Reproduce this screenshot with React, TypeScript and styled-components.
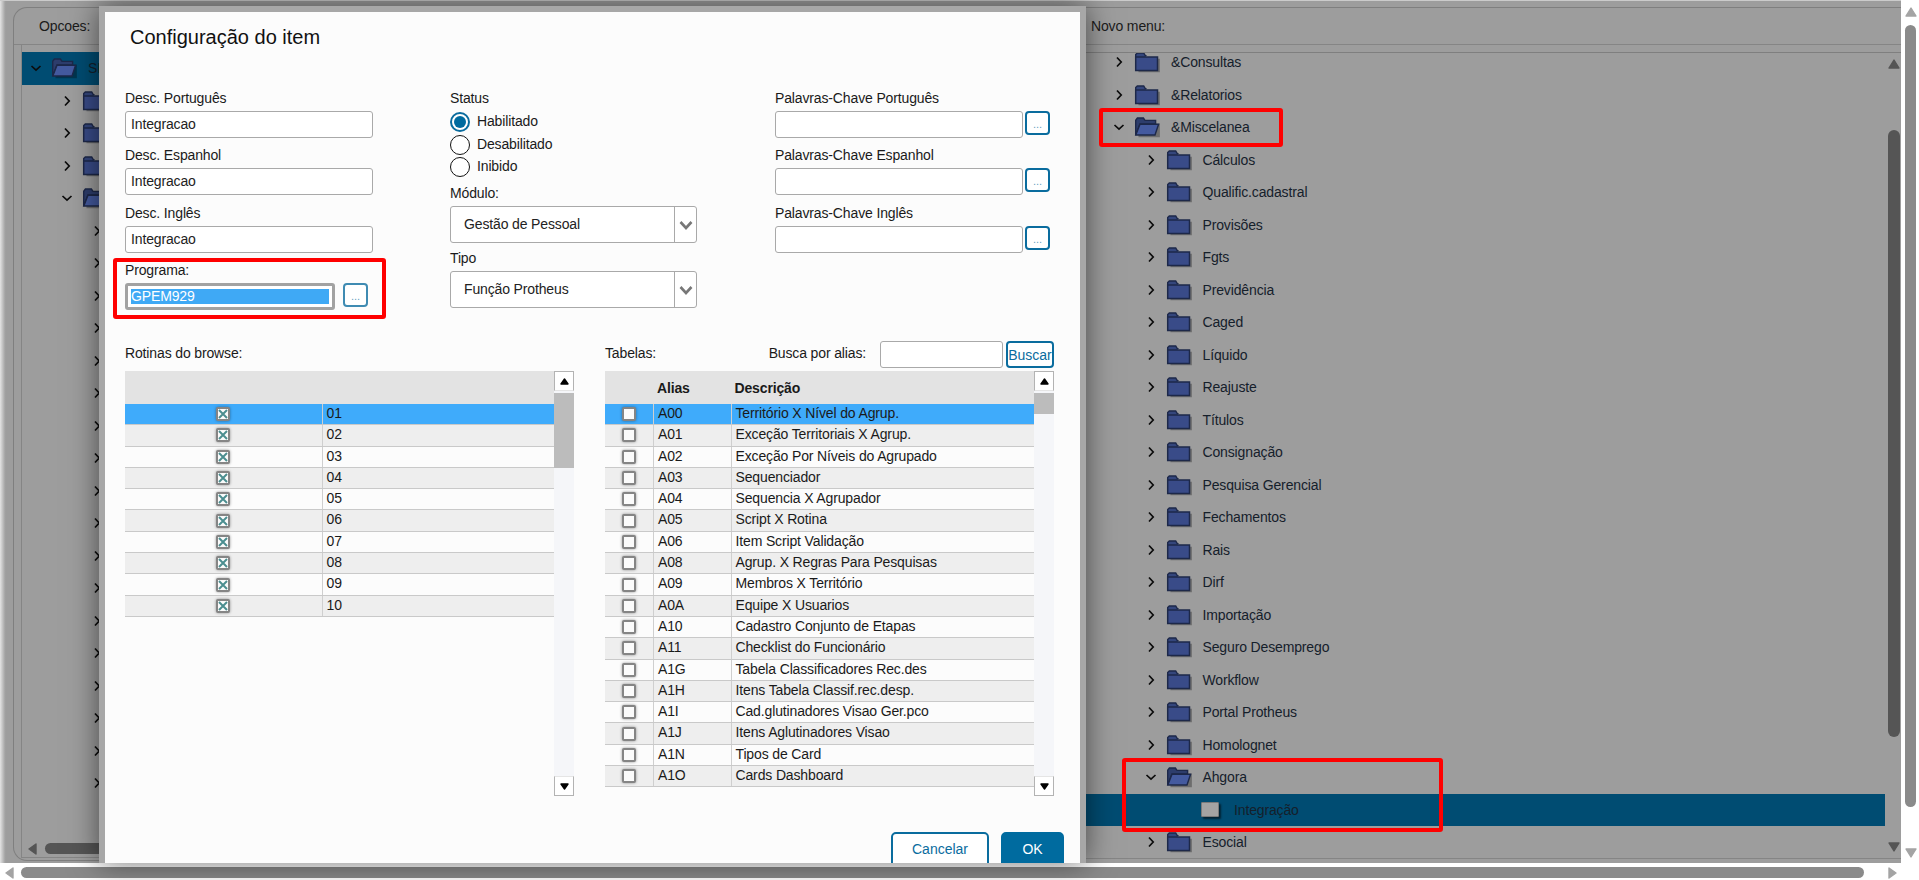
import React from "react";
import styled, { createGlobalStyle } from "styled-components";

const Global = createGlobalStyle`
  html, body { margin: 0; padding: 0; background: #fff; overflow: hidden; }
  * { box-sizing: border-box; }
  body { font-family: "Liberation Sans", Arial, sans-serif; font-size: 14px; letter-spacing: -0.14px; color: #111; }
`;

const Page = styled.div`
  position: relative; width: 1919px; height: 880px; overflow: hidden;
  display: grid; grid-template-columns: 1901px 18px; grid-template-rows: 863px 17px;
  background: #fff;
`;
const Backdrop = styled.div`
  display: flex; background: #9d9d9d; border-top: 1px solid #cbcbcb;
`;
const LeftPanel = styled.div`
  width: 1086px; padding: 6px 0 2px 13px; flex: none;
  background: linear-gradient(to right, #e4e4e4 0, #a2a2a2 5px, #9d9d9d 6px);
`;
const LeftFrame = styled.div`
  height: 100%; display: flex; flex-direction: column;
  border: 1px solid #7f7f7f; border-right: 0; border-radius: 14px 0 0 14px;
`;
const PanelHead = styled.div`
  height: 37px; flex: none; display: flex; align-items: center; padding-left: 25px;
  border-bottom: 1px solid #858585; color: #1b1b1b;
`;
const LeftBody = styled.div`
  flex: 1; min-height: 0; margin-left: 7px; display: flex; flex-direction: column;
  border-left: 1px solid #858585; border-bottom: 1px solid #858585; margin-bottom: 2px;
`;
const LeftTree = styled.div`
  flex: 1; min-height: 0; overflow: hidden; margin-top: 7px;
`;
const TreeRow = styled.div<{ $pad: number; $active?: boolean }>`
  height: 32.5px; display: flex; align-items: center; padding-left: ${(p) => p.$pad}px;
  background: ${(p) => (p.$active ? "#004c72" : "transparent")};
  color: #15202b; white-space: nowrap;
`;
const ChevronSlot = styled.span`
  width: 12px; flex: none; display: flex; justify-content: center; align-items: center;
`;
const FolderSlot = styled.span`
  width: 24px; height: 20px; flex: none; margin: 0 12px 0 10px; display: block;
`;
const LeafBox = styled.span`
  display: block; width: 18px; height: 15px; margin: 2px 0 0 3px;
  background: #a3a3a3; border: 1px solid #7a7a7a; border-radius: 1px;
  box-shadow: 2px 2px 2px rgba(0, 0, 0, 0.55);
`;
const HBarRow = styled.div`
  height: 11px; margin-bottom: 3px; flex: none; display: flex; align-items: center; gap: 8px; padding-left: 6px;
`;
const DarkThumb = styled.div`
  flex: 1; height: 11px; background: #555; border-radius: 6px;
`;
const RightPanel = styled.div`
  flex: 1; min-width: 0; display: flex; flex-direction: column; padding-top: 6px; padding-bottom: 4px;
`;
const RightHead = styled(PanelHead)`
  border-top: 1px solid #7f7f7f; padding-left: 5px; height: 38px;
`;
const RightBody = styled.div`
  flex: 1; min-height: 0; display: flex; margin-top: 7px;
  border-top: 1px solid #7f7f7f; border-bottom: 1px solid #858585;
`;
const RightTree = styled.div`
  flex: 1; min-width: 0; overflow: hidden;
`;
const RightTreeInner = styled.div`
  margin-top: -7px;
`;
const InnerScroll = styled.div`
  width: 16px; flex: none; padding: 6px 1px 6px 3px; display: flex; flex-direction: column; align-items: center;
`;
const InnerThumb = styled.div`
  width: 12px; height: 607px; margin-top: 61px; background: #555; border-radius: 6px; flex: none;
`;
const PushDown = styled.div`
  margin-top: auto; display: flex;
`;

const RightRail = styled.div`
  background: #fff; padding: 7px 0 5px 4px; width: 18px; display: flex; flex-direction: column; align-items: flex-start;
`;
const RailThumb = styled.div`
  width: 11px; height: 782px; margin-top: 8px; background: #8a8a8a; border-radius: 6px; flex: none;
`;
const BottomRail = styled.div`
  grid-column: 1 / 3; background: #fff; padding: 4px 0 2px 5px; display: flex; align-items: flex-start;
`;
const BottomThumb = styled.div`
  width: 1843px; height: 11px; margin: 0 24px 0 7px; background: #8a8a8a; border-radius: 6px; flex: none;
`;

const Modal = styled.div`
  position: absolute; left: 99px; top: 6px; width: 987px; height: 857px;
  border: 6px solid #a7a7a7; border-bottom: 0;
  box-shadow: 0 0 28px rgba(0, 0, 0, 0.55);
`;
const ModalBody = styled.div`
  height: 100%; background: #fcfcfc; overflow: hidden; display: flex; flex-direction: column;
`;
const Title = styled.h2`
  margin: 0; height: 78px; flex: none; padding-left: 25px; font-size: 20px; font-weight: 400; line-height: 50px; letter-spacing: 0; color: #111;
`;
const UpperForm = styled.div`
  height: 251px; flex: none; padding-left: 20px; display: grid; grid-template-columns: repeat(3, 325px);
`;
const FieldColumn = styled.div`
  display: flex; flex-direction: column; gap: 9.4px;
`;
const Field = styled.div``;
const Label = styled.div`
  height: 21px; line-height: 16px; color: #1a1a1a; white-space: nowrap;
`;
const InputRow = styled.div`
  display: flex; align-items: flex-start; gap: 2px;
`;
const TextBox = styled.div<{ $w?: number }>`
  width: ${(p) => p.$w ?? 248}px; height: 27px; background: #fff; border: 1px solid #a9a9a9; border-radius: 3px;
  padding-left: 5px; line-height: 25px; color: #222; flex: none;
`;
const FocusBox = styled.div`
  width: 210px; height: 27px; border: 3px solid #a2a2a2; border-radius: 3px; background: #fff; padding: 3px; flex: none;
`;
const Selected = styled.div`
  height: 15px; line-height: 15px; background: #3fa9f5; color: #fff; padding-left: 0;
`;
const ProgramRow = styled(InputRow)`
  gap: 8px;
`;
const DotsButton = styled.button`
  width: 25px; height: 24px; flex: none; padding: 0; background: #fff; border: 2px solid #0a6c9e; border-radius: 4px;
  color: #6a9fc0; font: 11px "Liberation Sans", Arial, sans-serif; line-height: 22px;
`;
const DotsWide = styled(DotsButton)`
  border-color: #3f8bb2;
`;
const RadioGroup = styled.div`
  display: flex; flex-direction: column;
`;
const RadioRow = styled.label`
  height: 22.5px; display: flex; align-items: center; gap: 7px; color: #1a1a1a;
`;
const RadioText = styled.span`
  margin-top: -2px;
`;
const RadioMark = styled.span<{ $on?: boolean }>`
  width: 20px; height: 20px; flex: none; border-radius: 50%; background: #fff;
  border: ${(p) => (p.$on ? "2px solid #0a6c9e" : "1px solid #111")};
  display: flex; align-items: center; justify-content: center;
  &::after { content: ""; display: ${(p) => (p.$on ? "block" : "none")}; width: 12px; height: 12px; border-radius: 50%; background: #006b9f; }
`;
const SpacedLabel = styled(Label)<{ $top: number }>`
  margin-top: ${(p) => p.$top}px;
`;
const StatusLabel = styled(Label)``;
const SelectBox = styled.div`
  width: 247px; height: 37px; display: flex; background: #fff; border: 1px solid #a9a9a9; border-radius: 3px;
`;
const SelectText = styled.div`
  flex: 1; padding-left: 13px; line-height: 35px; color: #222;
`;
const SelectArrow = styled.div`
  width: 22px; flex: none; border-left: 1px solid #a9a9a9; display: flex; align-items: center; justify-content: center;
`;

const LowerForm = styled.div`
  flex: none; padding-left: 20px; display: flex; gap: 31px;
`;
const GridBlock = styled.div`
  width: 449px; flex: none;
`;
const GridHead = styled.div`
  height: 30px; display: flex; align-items: flex-start;
`;
const HeadLabel = styled.div`
  line-height: 24px; color: #1a1a1a; white-space: nowrap;
`;
const SearchLabel = styled(HeadLabel)`
  margin-left: auto; margin-right: 14px;
`;
const SearchBox = styled(TextBox)`
  width: 123px;
`;
const SearchButton = styled.button`
  width: 48px; height: 27px; margin-left: 3px; padding: 0; background: #fff; border: 2px solid #0a6c9e; border-radius: 4px;
  color: #0a6c9e; font: 14px "Liberation Sans", Arial, sans-serif; white-space: nowrap; overflow: hidden;
`;
const GridBody = styled.div`
  height: 425px; display: flex;
`;
const Table = styled.div`
  width: 429px; flex: none;
`;
const TableHead = styled.div<{ $cols: string }>`
  height: 33px; background: #e3e3e3; display: grid; grid-template-columns: ${(p) => p.$cols}; align-items: center; font-weight: 700; color: #1a1a1a;
`;
const HeadCell = styled.div`
  padding-left: 4px;
`;
const Row = styled.div<{ $cols: string; $alt?: boolean; $sel?: boolean }>`
  height: 21.3px; display: grid; grid-template-columns: ${(p) => p.$cols};
  background: ${(p) => (p.$sel ? "#3fabfb" : p.$alt ? "#eeeeee" : "#fcfcfc")};
  border-bottom: 1px solid #c9c9c9; color: #1a1a1a;
`;
const CheckCell = styled.div`
  display: flex; align-items: center; justify-content: center;
`;
const Cell = styled.div`
  border-left: 1px solid #cfcfcf; padding-left: 4px; line-height: 19px; white-space: nowrap; overflow: hidden;
`;
const CheckBox = styled.span`
  width: 14px; height: 14px; display: flex; align-items: center; justify-content: center; background: #fbfbfb;
  border: 2px solid #858585; border-radius: 2px; box-shadow: 0 0 3px rgba(0, 0, 0, 0.4);
`;
const ScrollCol = styled.div`
  width: 20px; flex: none; background: #f5f6f9; display: flex; flex-direction: column;
`;
const ScrollBtn = styled.div`
  height: 20px; flex: none; background: #fff; border: 1px solid #b3b3b3; border-bottom-color: #e5e5e5;
  display: flex; align-items: center; justify-content: center;
`;
const ScrollBtnDown = styled(ScrollBtn)`
  margin-top: auto; border-top-color: #e5e5e5; border-bottom-color: #b3b3b3;
`;
const ScrollThumb = styled.div<{ $h: number }>`
  height: ${(p) => p.$h}px; margin-top: 2px; background: #bcbcbc; flex: none;
`;
const Footer = styled.div`
  flex: none; margin-top: 36px; padding-right: 16px; display: flex; justify-content: flex-end; gap: 12px;
`;
const GhostButton = styled.button`
  width: 98px; height: 40px; background: #fff; border: 2px solid #0a6c9e; border-radius: 5px; padding: 0 0 7px;
  color: #0a6c9e; font: 14px "Liberation Sans", Arial, sans-serif;
`;
const PrimaryButton = styled(GhostButton)`
  width: 63px; background: #006b9f; color: #fff; border-color: #006b9f;
`;

const Mark = styled.div`
  position: absolute; border: 4px solid #f00; border-radius: 3px; pointer-events: none;
`;
const ProgramaMark = styled(Mark)`
  left: 113px; top: 258px; width: 273px; height: 61px;
`;
const MiscelaneaMark = styled(Mark)`
  left: 1099px; top: 108px; width: 184px; height: 39px;
`;
const AhgoraMark = styled(Mark)`
  left: 1122px; top: 758px; width: 321px; height: 74px;
`;

const Chevron = ({ open }: { open?: boolean }) => (
  <svg width="12" height="12" viewBox="0 0 12 12" aria-hidden>
    <path
      d={open ? "M1.5 4l4.5 4.2L10.5 4" : "M4 1.5l4.2 4.5L4 10.5"}
      fill="none"
      stroke="#0c0c0c"
      strokeWidth="1.7"
    />
  </svg>
);

const Folder = ({ open }: { open?: boolean }) => (
  <svg width="24" height="20" viewBox="0 0 24 20" aria-hidden style={{ overflow: "visible" }}>
    <path d="M2 19.5h21.5V6L3 6z" fill="rgba(0,0,0,.3)" transform="translate(1.4 0.8)" />
    {open ? (
      <>
        <path d="M.7 18V3.2L2.4 1h6l1.6 2.4h10.6V7H5L.7 18z" fill="#2d3d6c" stroke="#1d2849" strokeWidth="1.4" />
        <path d="M.8 18L5 7.2h18.6L20 18z" fill="#445a9f" stroke="#1d2849" strokeWidth="1.4" />
      </>
    ) : (
      <>
        <path d="M.7 18.4V2.6L2.3 1h6.4l1.6 2.6h1.2" fill="#34467c" stroke="#1d2849" strokeWidth="1.4" />
        <path d="M.7 5h21.8v13.4H.7z" fill="#394b88" stroke="#1d2849" strokeWidth="1.5" />
      </>
    )}
  </svg>
);

const Tri = ({ dir, color, w = 11, h = 9 }: { dir: "up" | "down" | "left" | "right"; color: string; w?: number; h?: number }) => {
  const pts = {
    up: `${w / 2},1 ${w - 1},${h - 1} 1,${h - 1}`,
    down: `1,1 ${w - 1},1 ${w / 2},${h - 1}`,
    left: `1,${h / 2} ${w - 1},1 ${w - 1},${h - 1}`,
    right: `1,1 ${w - 1},${h / 2} 1,${h - 1}`,
  }[dir];
  return (
    <svg width={w} height={h} viewBox={`0 0 ${w} ${h}`} aria-hidden style={{ flex: "none", display: "block" }}>
      <polygon points={pts} fill={color} stroke={color} strokeLinejoin="round" strokeWidth="1.4" />
    </svg>
  );
};

const CheckIcon = ({ checked }: { checked: boolean }) => (
  <CheckBox>
    {checked && (
      <svg width="10" height="10" viewBox="0 0 10 10" aria-hidden>
        <path d="M1 1l8 8M9 1l-8 8" stroke="#4b8e90" strokeWidth="2" />
      </svg>
    )}
  </CheckBox>
);

const rightTree: { label: string; depth: number; open?: boolean; leaf?: boolean }[] = [
  { label: "&Consultas", depth: 0 },
  { label: "&Relatorios", depth: 0 },
  { label: "&Miscelanea", depth: 0, open: true },
  ...[
    "Cálculos", "Qualific.cadastral", "Provisões", "Fgts", "Previdência", "Caged", "Líquido", "Reajuste",
    "Títulos", "Consignação", "Pesquisa Gerencial", "Fechamentos", "Rais", "Dirf", "Importação",
    "Seguro Desemprego", "Workflow", "Portal Protheus", "Homolognet",
  ].map((label) => ({ label, depth: 1 })),
  { label: "Ahgora", depth: 1, open: true },
  { label: "Integração", depth: 2, leaf: true },
  { label: "Esocial", depth: 1 },
];

const tables: [string, string][] = [
  ["A00", "Território X Nível do Agrup."],
  ["A01", "Exceção Territoriais X Agrup."],
  ["A02", "Exceção Por Níveis do Agrupado"],
  ["A03", "Sequenciador"],
  ["A04", "Sequencia X Agrupador"],
  ["A05", "Script X Rotina"],
  ["A06", "Item Script Validação"],
  ["A08", "Agrup. X Regras Para Pesquisas"],
  ["A09", "Membros X Território"],
  ["A0A", "Equipe X Usuarios"],
  ["A10", "Cadastro Conjunto de Etapas"],
  ["A11", "Checklist do Funcionário"],
  ["A1G", "Tabela Classificadores Rec.des"],
  ["A1H", "Itens Tabela Classif.rec.desp."],
  ["A1I", "Cad.glutinadores Visao Ger.pco"],
  ["A1J", "Itens Aglutinadores Visao"],
  ["A1N", "Tipos de Card"],
  ["A1O", "Cards Dashboard"],
];

const routines = ["01", "02", "03", "04", "05", "06", "07", "08", "09", "10"];
const ROUTINE_COLS = "196.5px 1fr";
const TABLE_COLS = "48px 77.5px 1fr";

export default function App() {
  return (
    <Page>
      <Global />
      <Backdrop>
        <LeftPanel>
          <LeftFrame>
            <PanelHead>Opcoes:</PanelHead>
            <LeftBody>
              <LeftTree>
                <TreeRow $pad={8} $active>
                  <ChevronSlot><Chevron open /></ChevronSlot>
                  <FolderSlot><Folder open /></FolderSlot>
                  SIGAGPE
                </TreeRow>
                {[0, 1, 2].map((i) => (
                  <TreeRow $pad={39} key={i}>
                    <ChevronSlot><Chevron /></ChevronSlot>
                    <FolderSlot><Folder /></FolderSlot>
                  </TreeRow>
                ))}
                <TreeRow $pad={39}>
                  <ChevronSlot><Chevron open /></ChevronSlot>
                  <FolderSlot><Folder open /></FolderSlot>
                </TreeRow>
                {Array.from({ length: 18 }, (_, i) => (
                  <TreeRow $pad={69} key={i}>
                    <ChevronSlot><Chevron /></ChevronSlot>
                  </TreeRow>
                ))}
              </LeftTree>
              <HBarRow>
                <Tri dir="left" color="#555" w={9} h={12} />
                <DarkThumb />
              </HBarRow>
            </LeftBody>
          </LeftFrame>
        </LeftPanel>
        <RightPanel>
          <RightHead>Novo menu:</RightHead>
          <RightBody>
            <RightTree>
              <RightTreeInner>
                {rightTree.map((n) => (
                  <TreeRow $pad={27 + n.depth * 31.5} $active={n.leaf} key={n.label}>
                    <ChevronSlot>{!n.leaf && <Chevron open={n.open} />}</ChevronSlot>
                    <FolderSlot>{n.leaf ? <LeafBox /> : <Folder open={n.open} />}</FolderSlot>
                    {n.label}
                  </TreeRow>
                ))}
              </RightTreeInner>
            </RightTree>
            <InnerScroll>
              <Tri dir="up" color="#555" w={12} h={10} />
              <InnerThumb />
              <PushDown><Tri dir="down" color="#555" w={12} h={10} /></PushDown>
            </InnerScroll>
          </RightBody>
        </RightPanel>
      </Backdrop>
      <RightRail>
        <Tri dir="up" color="#a4a4a4" w={12} h={10} />
        <RailThumb />
        <PushDown><Tri dir="down" color="#a4a4a4" w={12} h={10} /></PushDown>
      </RightRail>
      <BottomRail>
        <Tri dir="left" color="#a4a4a4" w={9} h={12} />
        <BottomThumb />
        <Tri dir="right" color="#a4a4a4" w={9} h={12} />
      </BottomRail>

      <Modal>
        <ModalBody>
          <Title>Configuração do item</Title>
          <UpperForm>
            <FieldColumn>
              {["Desc. Português", "Desc. Espanhol", "Desc. Inglês"].map((l) => (
                <Field key={l}>
                  <Label>{l}</Label>
                  <TextBox>Integracao</TextBox>
                </Field>
              ))}
              <Field>
                <Label>Programa:</Label>
                <ProgramRow>
                  <FocusBox><Selected>GPEM929</Selected></FocusBox>
                  <DotsWide>...</DotsWide>
                </ProgramRow>
              </Field>
            </FieldColumn>
            <div>
              <StatusLabel>Status</StatusLabel>
              <RadioGroup>
                <RadioRow><RadioMark $on /><RadioText>Habilitado</RadioText></RadioRow>
                <RadioRow><RadioMark /><RadioText>Desabilitado</RadioText></RadioRow>
                <RadioRow><RadioMark /><RadioText>Inibido</RadioText></RadioRow>
              </RadioGroup>
              <SpacedLabel $top={6.5}>Módulo:</SpacedLabel>
              <SelectBox>
                <SelectText>Gestão de Pessoal</SelectText>
                <SelectArrow>
                  <svg width="14" height="10" viewBox="0 0 14 10" aria-hidden>
                    <path d="M1.5 2l5.5 6 5.5-6" fill="none" stroke="#777" strokeWidth="2.6" />
                  </svg>
                </SelectArrow>
              </SelectBox>
              <SpacedLabel $top={7}>Tipo</SpacedLabel>
              <SelectBox>
                <SelectText>Função Protheus</SelectText>
                <SelectArrow>
                  <svg width="14" height="10" viewBox="0 0 14 10" aria-hidden>
                    <path d="M1.5 2l5.5 6 5.5-6" fill="none" stroke="#777" strokeWidth="2.6" />
                  </svg>
                </SelectArrow>
              </SelectBox>
            </div>
            <FieldColumn>
              {["Palavras-Chave Português", "Palavras-Chave Espanhol", "Palavras-Chave Inglês"].map((l) => (
                <Field key={l}>
                  <Label>{l}</Label>
                  <InputRow>
                    <TextBox />
                    <DotsButton>...</DotsButton>
                  </InputRow>
                </Field>
              ))}
            </FieldColumn>
          </UpperForm>
          <LowerForm>
            <GridBlock>
              <GridHead><HeadLabel>Rotinas do browse:</HeadLabel></GridHead>
              <GridBody>
                <Table>
                  <TableHead $cols={ROUTINE_COLS} />
                  {routines.map((r, i) => (
                    <Row $cols={ROUTINE_COLS} $sel={i === 0} $alt={i % 2 === 1} key={r}>
                      <CheckCell><CheckIcon checked /></CheckCell>
                      <Cell>{r}</Cell>
                    </Row>
                  ))}
                </Table>
                <ScrollCol>
                  <ScrollBtn><Tri dir="up" color="#000" w={9} h={7} /></ScrollBtn>
                  <ScrollThumb $h={75} />
                  <ScrollBtnDown><Tri dir="down" color="#000" w={9} h={7} /></ScrollBtnDown>
                </ScrollCol>
              </GridBody>
            </GridBlock>
            <GridBlock>
              <GridHead>
                <HeadLabel>Tabelas:</HeadLabel>
                <SearchLabel>Busca por alias:</SearchLabel>
                <SearchBox />
                <SearchButton>Buscar</SearchButton>
              </GridHead>
              <GridBody>
                <Table>
                  <TableHead $cols={TABLE_COLS}>
                    <span />
                    <HeadCell>Alias</HeadCell>
                    <HeadCell>Descrição</HeadCell>
                  </TableHead>
                  {tables.map(([a, d], i) => (
                    <Row $cols={TABLE_COLS} $sel={i === 0} $alt={i % 2 === 1} key={a}>
                      <CheckCell><CheckIcon checked={false} /></CheckCell>
                      <Cell>{a}</Cell>
                      <Cell>{d}</Cell>
                    </Row>
                  ))}
                </Table>
                <ScrollCol>
                  <ScrollBtn><Tri dir="up" color="#000" w={9} h={7} /></ScrollBtn>
                  <ScrollThumb $h={21} />
                  <ScrollBtnDown><Tri dir="down" color="#000" w={9} h={7} /></ScrollBtnDown>
                </ScrollCol>
              </GridBody>
            </GridBlock>
          </LowerForm>
          <Footer>
            <GhostButton>Cancelar</GhostButton>
            <PrimaryButton>OK</PrimaryButton>
          </Footer>
        </ModalBody>
      </Modal>

      <ProgramaMark />
      <MiscelaneaMark />
      <AhgoraMark />
    </Page>
  );
}
